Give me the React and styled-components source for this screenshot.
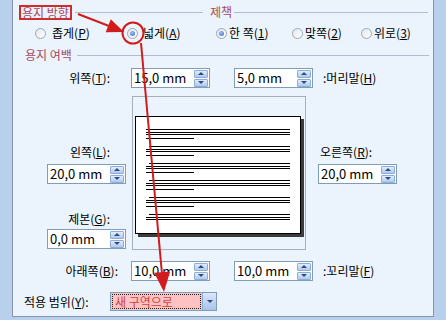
import React from 'react';
import styled, { createGlobalStyle } from 'styled-components';

const GlobalStyle = createGlobalStyle`
  html, body {
    margin: 0;
    padding: 0;
  }
  body {
    font-family: "Noto Sans CJK KR", "Noto Sans", sans-serif;
    font-size: 12px;
    color: #000;
  }
`;

const Frame = styled.div`
  position: relative;
  width: 446px;
  height: 320px;
  display: flex;
  align-items: flex-start;
  background: #b9d0ec;
  overflow: hidden;
`;

const Panel = styled.div`
  box-sizing: border-box;
  width: 422px;
  height: 317px;
  margin-left: 12px;
  background: #ebf3fc;
  border: 1px solid #8297ad;
  border-top: none;
  display: flex;
  flex-direction: column;
`;

const HeaderRow = styled.div`
  display: flex;
  align-items: center;
  height: 16px;
  margin-top: 4px;
`;

const Group = styled.div`
  display: flex;
  align-items: center;
  width: ${props => props.$width}px;
  margin-left: ${props => props.$left || 0}px;
`;

const Title = styled.span`
  color: #a84a5c;
  white-space: nowrap;
  line-height: ${props => (props.$boxed ? '11px' : '14px')};
  padding: ${props => (props.$boxed ? '0 1px' : '0')};
  border: ${props => (props.$boxed ? '2px solid #d42a2a' : 'none')};
`;

const Rule = styled.div`
  flex: 1;
  height: 1px;
  background: #aebccb;
  margin-left: ${props => props.$gap}px;
`;

const RadioRow = styled.div`
  display: grid;
  grid-template-columns: 92px 89px 76px 69px auto;
  align-items: center;
  height: 14px;
  margin-top: 6px;
  padding-left: 22px;
`;

const Option = styled.label`
  display: flex;
  align-items: center;
  white-space: nowrap;
  line-height: 14px;
`;

const RadioDot = styled.span`
  position: relative;
  box-sizing: border-box;
  width: 11px;
  height: 11px;
  border-radius: 50%;
  border: 1px solid #9ba7b5;
  background: linear-gradient(135deg, #e2e6ec, #ffffff);
  flex-shrink: 0;

  &::after {
    content: '';
    display: ${props => (props.$checked ? 'block' : 'none')};
    position: absolute;
    left: 2px;
    top: 2px;
    width: 5px;
    height: 5px;
    border-radius: 50%;
    background: radial-gradient(circle at 40% 35%, #9cc0f4, #3a68c0);
  }
`;

const OptionText = styled.span`
  margin-left: ${props => props.$gap}px;
`;

const SectionRow = styled.div`
  display: flex;
  align-items: center;
  height: 14px;
  margin-top: 8px;
  padding: 0 4px 0 12px;
`;

const FieldRow = styled.div`
  display: flex;
  align-items: center;
  height: ${props => props.$height || 20}px;
  margin-top: ${props => props.$top}px;
`;

const FieldLabel = styled.div`
  height: 14px;
  line-height: 14px;
  white-space: nowrap;
  width: ${props => (props.$width ? `${props.$width}px` : 'auto')};
  text-align: ${props => props.$align || 'left'};
  margin-top: ${props => props.$top || 0}px;
  margin-left: ${props => props.$left || 0}px;
  padding-right: ${props => props.$padRight || 0}px;
  padding-left: ${props => props.$padLeft || 0}px;
`;

const SpinBox = styled.div`
  box-sizing: border-box;
  width: 79px;
  height: 20px;
  flex-shrink: 0;
  margin-top: ${props => props.$top || 0}px;
  margin-left: ${props => props.$left || 0}px;
  border: 1px solid #7f9db9;
  background: #fff;
  display: flex;
  align-items: center;
  justify-content: space-between;
  padding: 0 1px 0 2px;
`;

const SpinValue = styled.span`
  font-size: 13px;
  line-height: 16px;
  white-space: nowrap;
`;

const SpinButtons = styled.div`
  display: flex;
  flex-direction: column;
  gap: 1px;
`;

const SpinButton = styled.div`
  box-sizing: border-box;
  width: 14px;
  height: 8px;
  border: 1px solid #8badd6;
  border-radius: 1px;
  background: linear-gradient(#e2ecfa, #b0c9ee);
  display: flex;
  align-items: center;
  justify-content: center;

  &::after {
    content: '';
    border-left: 3px solid transparent;
    border-right: 3px solid transparent;
    ${props =>
      props.$down
        ? 'border-top: 3px solid #2c4b82;'
        : 'border-bottom: 3px solid #2c4b82;'}
  }
`;

const Middle = styled.div`
  display: flex;
  height: 154px;
  margin-top: 8px;
`;

const SideColumn = styled.div`
  display: flex;
  flex-direction: column;
  align-items: ${props => props.$align};
  width: ${props => props.$width}px;
  margin-left: ${props => props.$left || 0}px;
`;

const Preview = styled.div`
  box-sizing: border-box;
  width: 174px;
  height: 154px;
  margin-left: 6px;
  border: 1px solid #a7b0ba;
  display: flex;
  align-items: center;
  padding: 3px 0 0 2px;
`;

const Paper = styled.div`
  box-sizing: border-box;
  width: 166px;
  height: 118px;
  background: #fff;
  border: 1px solid #000;
  box-shadow: 3px 3px 0 #3c3c3c;

  svg {
    display: block;
  }
`;

const ComboBox = styled.div`
  box-sizing: border-box;
  display: flex;
  width: 107px;
  height: 19px;
  border: 1px solid #7f9db9;
  background: #ffc2c2;
`;

const ComboField = styled.div`
  flex: 1;
  margin: 1px;
  border: 1px dotted #222;
  color: #cc4444;
  line-height: 13px;
  padding-left: 2px;
  white-space: nowrap;
`;

const ComboButton = styled.div`
  width: 13px;
  border-left: 1px solid #8badd6;
  background: linear-gradient(#dbe7f8, #a9c3ea);
  display: flex;
  align-items: center;
  justify-content: center;

  &::after {
    content: '';
    border-left: 3px solid transparent;
    border-right: 3px solid transparent;
    border-top: 3px solid #2c4b82;
  }
`;

const Overlay = styled.svg`
  position: absolute;
  left: 0;
  top: 0;
  pointer-events: none;
`;

const Spin = ({ value, top, left }) => (
  <SpinBox $top={top} $left={left}>
    <SpinValue>{value}</SpinValue>
    <SpinButtons>
      <SpinButton />
      <SpinButton $down />
    </SpinButtons>
  </SpinBox>
);

const Radio = ({ checked, gap, children }) => (
  <Option>
    <RadioDot $checked={checked} />
    <OptionText $gap={gap}>{children}</OptionText>
  </Option>
);

const groups = [12, 29, 46, 63, 80, 97];

const PaperLines = () => (
  <svg width="164" height="116">
    {groups.map((y, i) => (
      <g key={i} fill="#000">
        <rect x={i === 0 ? 10 : 13} y={y} width={i === 0 ? 144 : 141} height="1" />
        <rect x="10" y={y + 3} width="144" height="1" />
        <rect x="10" y={y + 5} width="144" height="1" />
        {i < groups.length - 1 && <rect x="10" y={y + 9} width="48" height="1" />}
      </g>
    ))}
  </svg>
);

export default function App() {
  return (
    <Frame>
      <GlobalStyle />
      <Panel>
        <HeaderRow>
          <Group $width={184} $left={6}>
            <Title $boxed>용지 방향</Title>
            <Rule $gap={3} />
          </Group>
          <Group $width={218} $left={7}>
            <Title>제책</Title>
            <Rule $gap={2} />
          </Group>
        </HeaderRow>

        <RadioRow>
          <Radio gap={6}>좁게(<u>P</u>)</Radio>
          <Radio gap={5} checked>넓게(<u>A</u>)</Radio>
          <Radio gap={2} checked>한 쪽(<u>1</u>)</Radio>
          <Radio gap={2}>맞쪽(<u>2</u>)</Radio>
          <Radio gap={2}>위로(<u>3</u>)</Radio>
        </RadioRow>

        <SectionRow>
          <Title>용지 여백</Title>
          <Rule $gap={5} />
        </SectionRow>

        <FieldRow $top={6}>
          <FieldLabel $width={97} $align="right">위쪽(<u>T</u>):</FieldLabel>
          <Spin value="15,0 mm" left={21} />
          <Spin value="5,0 mm" left={24} />
          <FieldLabel $left={10}>:머리말(<u>H</u>)</FieldLabel>
        </FieldRow>

        <Middle>
          <SideColumn $width={113} $align="flex-end">
            <FieldLabel $top={49} $padRight={16}>왼쪽(<u>L</u>):</FieldLabel>
            <Spin value="20,0 mm" top={5} />
            <FieldLabel $top={28} $padRight={16}>제본(<u>G</u>):</FieldLabel>
            <Spin value="0,0 mm" top={3} />
          </SideColumn>
          <Preview>
            <Paper>
              <PaperLines />
            </Paper>
          </Preview>
          <SideColumn $width={79} $left={12} $align="flex-start">
            <FieldLabel $top={49} $padLeft={2}>오른쪽(<u>R</u>):</FieldLabel>
            <Spin value="20,0 mm" top={5} />
          </SideColumn>
        </Middle>

        <FieldRow $top={11}>
          <FieldLabel $width={105} $align="right">아래쪽(<u>B</u>):</FieldLabel>
          <Spin value="10,0 mm" left={13} />
          <Spin value="10,0 mm" left={24} />
          <FieldLabel $left={10}>:꼬리말(<u>F</u>)</FieldLabel>
        </FieldRow>

        <FieldRow $top={11} $height={19}>
          <FieldLabel $width={86} $padLeft={11}>적용 범위(<u>Y</u>):</FieldLabel>
          <ComboBox>
            <ComboField>새 구역으로</ComboField>
            <ComboButton />
          </ComboBox>
        </FieldRow>
      </Panel>

      <Overlay width="446" height="320">
        <g stroke="#d01c1c" strokeWidth="2" fill="none">
          <circle cx="133" cy="33" r="10.5" />
          <line x1="78" y1="14" x2="109" y2="26" />
          <line x1="141" y1="43" x2="162" y2="274" />
        </g>
        <g fill="#d01c1c">
          <polygon points="124,32 105.7,32.3 110.8,19.3" />
          <polygon points="164,292 154.2,272.8 170.1,271.4" />
        </g>
      </Overlay>
    </Frame>
  );
}
